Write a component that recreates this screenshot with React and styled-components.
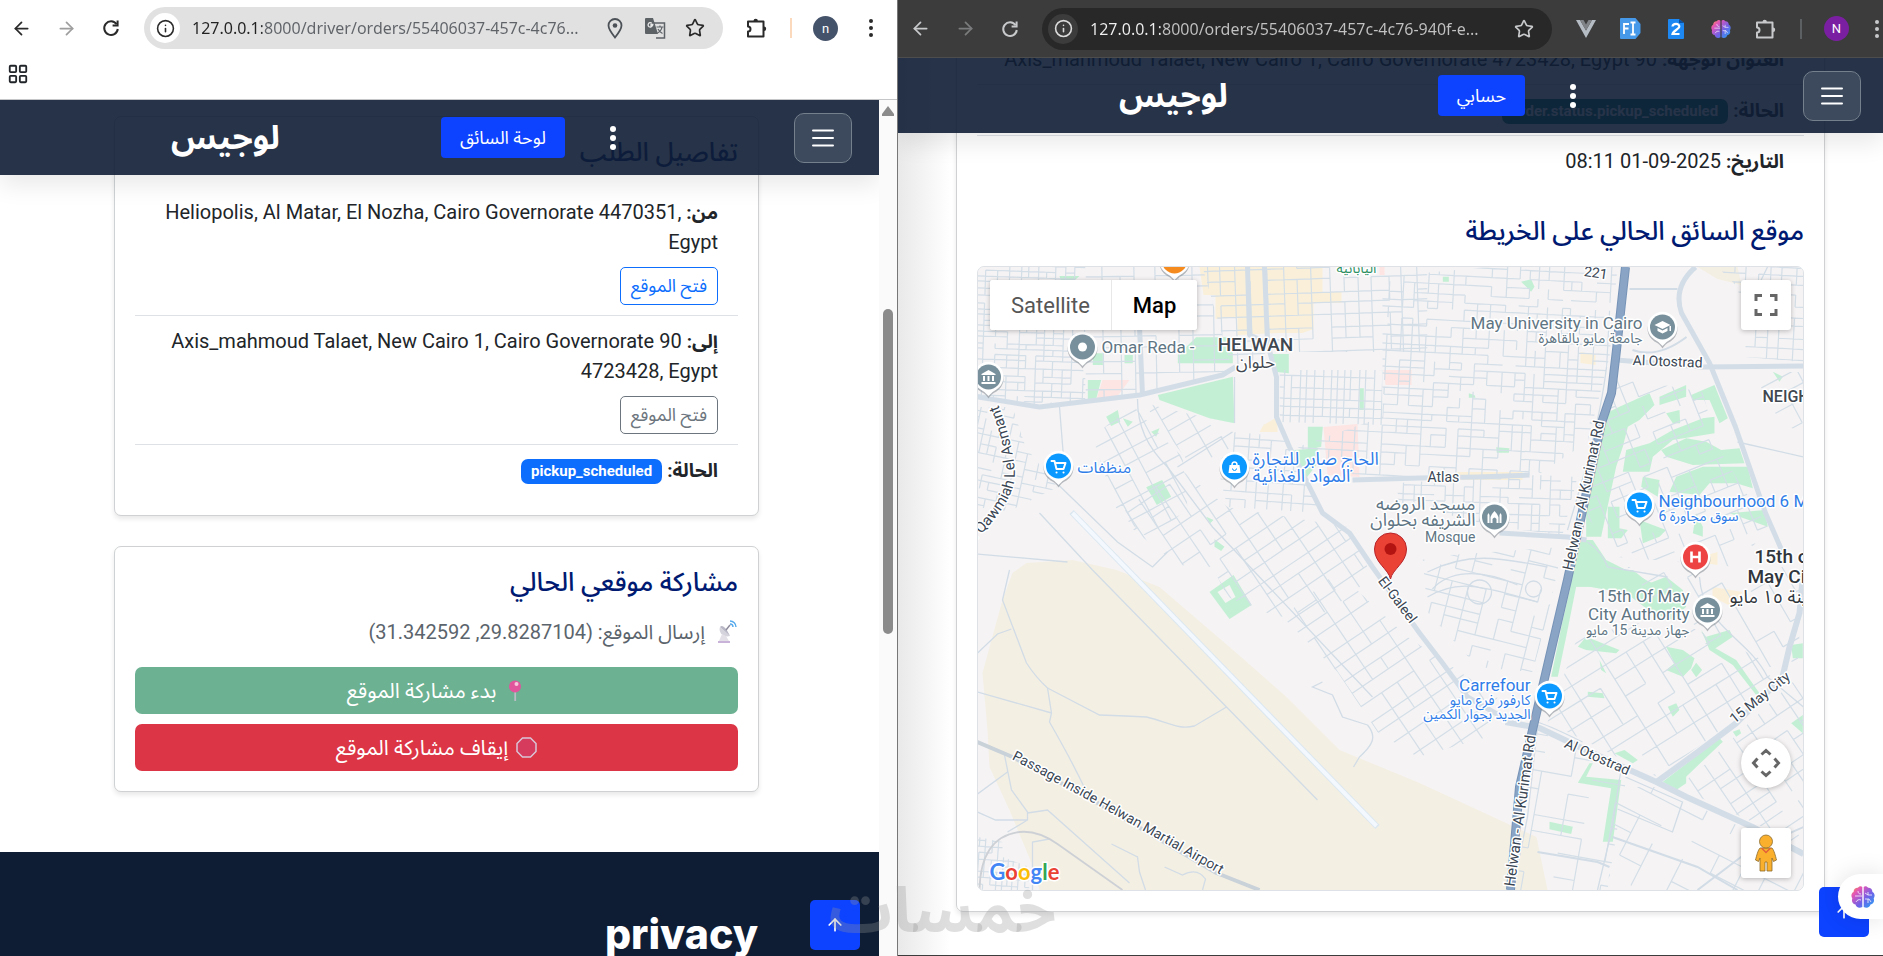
import React from "react";
import styled, { createGlobalStyle, css } from "styled-components";
import { ArrowLeft, ArrowRight, ArrowUp, Info, LayoutGrid, Star } from "lucide-react";

const sans = `Roboto, "Noto Sans Arabic", "Noto Sans", "DejaVu Sans", sans-serif`;
const chromeFont = `"Noto Sans", "Open Sans", sans-serif`;

const GlobalStyle = createGlobalStyle`
  * { box-sizing: border-box; }
  body { margin: 0; background: #fff; font-family: ${sans}; color: #212529; }
  button, input { font-family: inherit; }
  button { cursor: pointer; }
  h2, p, ul { margin: 0; padding: 0; }
`;

/* ---------- desktop and browser windows ---------- */

const Desktop = styled.div`
  position: relative;
  display: grid;
  grid-template-columns: minmax(0, 898fr) minmax(0, 985fr);
  height: 100vh;
  min-height: 600px;
  overflow: hidden;
`;

const Window = styled.section`
  display: flex;
  flex-direction: column;
  min-width: 0;
  min-height: 0;
  overflow: hidden;
  background: #fff;
  ${(p) => p.$dark
    ? css`border-bottom: 1px solid #3c3c3c;`
    : css`border-right: 1px solid #777;`}
`;

const Toolbar = styled.header`
  display: flex;
  align-items: center;
  flex: none;
  height: ${(p) => (p.$dark ? 58 : 56)}px;
  padding: 0 ${(p) => (p.$dark ? 0 : 14)}px 0 ${(p) => (p.$dark ? 12 : 11)}px;
  background: ${(p) => (p.$dark ? "#3c3c3c" : "#fff")};
  color: ${(p) => (p.$dark ? "#c7c9cb" : "#2a2a2a")};
  border-bottom: ${(p) => (p.$dark ? "1px solid #4d4d4d" : "0")};
`;

const ToolGroup = styled.div`
  display: flex;
  align-items: center;
  flex: none;
  gap: ${(p) => p.$gap}px;
`;

const IconButton = styled.button`
  display: grid;
  place-items: center;
  flex: none;
  width: ${(p) => p.$w || 20}px;
  height: 32px;
  padding: 0;
  border: 0;
  background: none;
  color: inherit;
  opacity: ${(p) => (p.$faded ? 0.45 : 1)};
`;

const Omnibox = styled.form`
  display: flex;
  align-items: center;
  flex: 1;
  min-width: 0;
  height: 42px;
  margin: 0 22px 0 ${(p) => (p.$dark ? 22 : 23)}px;
  padding: 0 18px 0 6px;
  gap: 18px;
  border-radius: 21px;
  background: ${(p) => (p.$dark ? "#282828" : "#e1e1e1")};
`;

const SiteInfo = styled.button`
  display: grid;
  place-items: center;
  flex: none;
  width: 30px;
  height: 30px;
  margin-right: -6px;
  padding: 0;
  border: 0;
  border-radius: 50%;
  background: ${(p) => (p.$dark ? "#3c3c3c" : "#fff")};
  color: ${(p) => (p.$dark ? "#dcdcdc" : "#2a2a2a")};
`;

const Address = styled.input`
  flex: 1;
  min-width: 0;
  height: 30px;
  padding: 0;
  border: 0;
  outline: 0;
  font-family: ${chromeFont};
  font-size: 16px;
  color: transparent;
  background: linear-gradient(
    90deg,
    ${(p) => (p.$dark ? "#f0f0f0 70px, #c2c2c2 70px" : "#222 70px, #5f6368 70px")}
  );
  background-clip: text;
  -webkit-background-clip: text;
`;

const Divider = styled.span`
  width: 2px;
  height: 20px;
  background: ${(p) => (p.$dark ? "#5d6063" : "#fbd9bd")};
`;

const Avatar = styled.button`
  width: 25px;
  height: 25px;
  padding: 0;
  border: 0;
  border-radius: 50%;
  background: ${(p) => p.$bg};
  color: #fff;
  font-size: 13px;
  line-height: 25px;
`;

const Bookmarks = styled.div`
  display: flex;
  align-items: center;
  flex: none;
  height: 44px;
  padding: 0 7px 8px;
  border-bottom: 1px solid #c4c6c8;
`;

/* ---------- web page ---------- */

const Viewport = styled.div`
  position: relative;
  display: flex;
  flex: 1;
  min-height: 0;
  overflow: hidden;
`;

const Page = styled.div`
  position: relative;
  flex: 1;
  min-width: 0;
  overflow: hidden;
  direction: rtl;
  ${(p) => p.$shaded && css`
    background: linear-gradient(90deg, #e9e9e9, #fff 52px);
  `}
`;

const Navbar = styled.nav`
  position: absolute;
  z-index: 2;
  inset: 0 0 auto;
  display: flex;
  align-items: center;
  justify-content: space-between;
  height: 75px;
  padding: 0 ${(p) => p.$end}px 0 ${(p) => p.$start}px;
  background: rgba(14, 29, 52, 0.9);
  box-shadow: 0 10px 25px rgba(0, 0, 0, 0.09);
`;

const NavActions = styled.div`
  display: flex;
  align-items: center;
  gap: 44px;
  padding-right: 16px;
  color: #fff;
`;

const MenuButton = styled.button`
  display: grid;
  place-items: center;
  width: 58px;
  height: 50px;
  padding: 0;
  border: 1px solid #74808c;
  border-radius: 10px;
  background: #3d495c;
  color: #fff;
`;

const NavButton = styled.a`
  padding: 0 19px;
  border-radius: 4px;
  background: #0d42ff;
  color: #fff;
  font-size: 18px;
  line-height: 41px;
  text-decoration: none;
  white-space: nowrap;
`;

const Brand = styled.a`
  color: #fff;
  font-size: 33px;
  font-weight: 700;
  line-height: 50px;
  text-decoration: none;
`;

const Content = styled.main`
  display: flex;
  flex-direction: column;
  gap: 30px;
  padding: ${(p) => (p.$scrolled ? "0 58px" : "16px 120px 60px 114px")};
  margin-top: ${(p) => (p.$scrolled ? -45 : 0)}px;
`;

const Card = styled.article`
  padding: 20px;
  border: 1px solid #cfd1d3;
  border-radius: 7px;
  background: ${(p) => (p.$clear ? "transparent" : "#fff")};
  box-shadow: 0 3px 5px rgba(0, 0, 0, 0.09);
`;

const Title = styled.h2`
  margin: ${(p) => (p.$spaced ? 30 : 0)}px 0 20px;
  color: #001a72;
  font-size: 26px;
  font-weight: 500;
  line-height: 30px;
`;

const Details = styled.ul`
  list-style: none;
`;

const Detail = styled.li`
  padding: 10px 20px;
  font-size: 20px;
  line-height: 30px;
  & + & { border-top: 1px solid #dee2e6; }
`;

const Term = styled.strong`
  font-size: 19px;
  line-height: 20px;
`;

const Badge = styled.span`
  display: inline-block;
  padding: 0 10px;
  border-radius: 7px;
  background: ${(p) => p.$bg};
  color: #fff;
  font-size: 15px;
  font-weight: 700;
  line-height: 25px;
  vertical-align: middle;
`;

const OpenLink = styled.a`
  display: block;
  width: fit-content;
  margin-top: 10px;
  padding: 0 10px;
  border: 1px solid ${(p) => p.$color};
  border-radius: 5px;
  color: ${(p) => p.$color};
  font-size: 18px;
  line-height: 36px;
  text-decoration: none;
`;

const Status = styled.p`
  display: flex;
  align-items: center;
  gap: 8px;
  margin-bottom: 20px;
  color: #5b646c;
  font-size: 20px;
  line-height: 30px;
`;

const Actions = styled.div`
  display: grid;
  gap: 10px;
`;

const ActionButton = styled.button`
  display: flex;
  align-items: center;
  justify-content: center;
  gap: 8px;
  height: 47px;
  border: 0;
  border-radius: 7px;
  background: ${(p) => p.$bg};
  color: #fff;
  font-size: 21px;
`;

const Footer = styled.footer`
  min-height: 180px;
  padding: 52px 121px;
  background: #0e1d34;
`;

const FooterTitle = styled.h2`
  color: #fff;
  font-family: Inter, sans-serif;
  font-size: 41px;
  font-weight: 800;
  line-height: 60px;
`;

const ToTop = styled.a`
  position: absolute;
  z-index: 3;
  bottom: ${(p) => p.$bottom}px;
  right: ${(p) => p.$right}px;
  display: grid;
  place-items: center;
  width: 50px;
  height: 50px;
  border-radius: 5px;
  background: #0d42ff;
  color: #fff;
`;

const Scrollbar = styled.div`
  display: flex;
  flex-direction: column;
  align-items: center;
  flex: none;
  width: 18px;
  padding-top: 6px;
  background: #fafafa;
`;

const Thumb = styled.div`
  width: 10px;
  height: 325px;
  margin-top: 193px;
  border-radius: 5px;
  background: #8b8b8b;
`;

const Assistant = styled.button`
  position: absolute;
  z-index: 4;
  right: 0;
  bottom: 36px;
  display: flex;
  align-items: center;
  width: 45px;
  height: 45px;
  padding: 0 8px 0 13px;
  border: 0;
  border-radius: 23px 0 0 23px;
  background: #fff;
  box-shadow: 0 0 24px rgba(0, 0, 0, 0.12);
`;

const Watermark = styled.div`
  position: absolute;
  z-index: 5;
  left: 44%;
  bottom: 0;
  color: rgba(150, 150, 150, 0.3);
  font-family: "Noto Sans Arabic", "DejaVu Sans", sans-serif;
  font-size: 63px;
  font-weight: 700;
  line-height: 88px;
  pointer-events: none;
`;

/* ---------- map ---------- */

const MapFrame = styled.div`
  position: relative;
  height: 625px;
  border: 1px solid #dee2e6;
  border-radius: 7px;
  overflow: hidden;
  direction: ltr;
  background: #f5f3f4;
`;

const MapDrawing = styled.svg`
  display: block;
  width: 100%;
  height: 100%;
`;

const MapTypes = styled.div`
  position: absolute;
  top: 13px;
  left: 12px;
  display: flex;
  border-radius: 3px;
  overflow: hidden;
  background: #fff;
  box-shadow: 0 1px 5px rgba(0, 0, 0, 0.25);
`;

const MapType = styled.button`
  height: 50px;
  padding: 0 21px;
  border: 0;
  border-left: ${(p) => (p.$active ? "1px solid #e8e8e8" : "0")};
  background: #fff;
  color: ${(p) => (p.$active ? "#000" : "#565656")};
  font-size: 22px;
  font-weight: ${(p) => (p.$active ? 500 : 400)};
`;

const MapControls = styled.div`
  position: absolute;
  inset: 13px 12px 12px auto;
  display: flex;
  flex-direction: column;
  gap: 40px;
`;

const MapControl = styled.button`
  display: grid;
  place-items: center;
  width: 50px;
  height: 50px;
  margin-bottom: ${(p) => (p.$first ? "auto" : 0)};
  padding: 0;
  border: 0;
  border-radius: ${(p) => (p.$round ? "50%" : "3px")};
  background: #fff;
  box-shadow: 0 1px 5px rgba(0, 0, 0, 0.25);
`;

const Label = styled.text`
  font-family: ${sans};
  font-size: ${(p) => p.$size || 17}px;
  font-weight: ${(p) => p.$weight || 400};
  fill: ${(p) => p.$color || "#607583"};
  stroke: #fff;
  stroke-width: 3px;
  stroke-linejoin: round;
  paint-order: stroke;
`;

const RoadLabel = styled(Label).attrs((p) => ({ $size: p.$size || 14, $color: "#3a4654" }))``;

const Logo = styled.text`
  font-family: Lato, sans-serif;
  font-size: 22px;
  font-weight: 700;
  stroke: #fff;
  stroke-width: 3px;
  paint-order: stroke;
`;

/* ---------- icons ---------- */

const Reload = () => (
  <svg width="20" height="20" viewBox="0 0 20 20" fill="none" stroke="currentColor" strokeWidth="2">
    <path d="M15.6 6.2A6.8 6.8 0 1 0 16.8 11" />
    <path d="M16.6 2.6v5h-5" />
  </svg>
);

const Dots = () => (
  <svg width="8" height="20" viewBox="-4 -10 8 20" fill="currentColor">
    <circle cy="-7" r="2" /><circle r="2" /><circle cy="7" r="2" />
  </svg>
);

const LargeDots = () => (
  <svg width="8" height="28" viewBox="-4 -14 8 28" fill="currentColor">
    <circle cy="-9" r="3" /><circle r="3" /><circle cy="9" r="3" />
  </svg>
);

const Puzzle = () => (
  <svg width="22" height="22" viewBox="0 0 22 22" fill="none" stroke="currentColor" strokeWidth="2" strokeLinejoin="round">
    <path d="M2 4.500h15.500v15H2v-5a2.500 2.500 0 0 0 0-5z" />
    <path d="M7.500 4a2.200 2.200 0 0 1 4.400 0zM18 9.500a2.200 2.200 0 0 1 0 4.400z" fill="currentColor" stroke="none" />
  </svg>
);

const LocationPin = () => (
  <svg width="16" height="21" viewBox="0 0 16 21" fill="none" stroke="#4b5157" strokeWidth="1.800">
    <path d="M8 19.500C4 14.500 1.500 11 1.500 7.500a6.500 6.500 0 0 1 13 0c0 3.500-2.500 7-6.500 12z" />
    <circle cx="8" cy="7.500" r="2.300" fill="#4b5157" stroke="none" />
  </svg>
);

const Translate = () => (
  <svg width="21" height="21" viewBox="0 0 21 21" fill="none">
    <path d="M9 5h10.500v15H11" stroke="#5d6267" strokeWidth="1.500" />
    <path d="M1 0h7l5 16H1a1 1 0 0 1-1-1V1a1 1 0 0 1 1-1z" fill="#5d6267" />
    <path d="M8.500 6.500H6v1.500h1.200A2.200 2.200 0 1 1 6.700 5.200" stroke="#e8e8e8" strokeWidth="1.300" />
    <path d="M11.500 9h7M15 7.500V9M17 9c-.5 3-2.500 5-4.500 6M13 11c1 2 2.500 3.500 4.500 4.500" stroke="#5d6267" strokeWidth="1.200" />
  </svg>
);

const Bars = () => (
  <svg width="22" height="20" viewBox="0 0 22 20" stroke="#fff" strokeWidth="2" strokeLinecap="round">
    <path d="M1 2.500h20M1 10h20M1 17.500h20" />
  </svg>
);

const VueMark = () => (
  <svg width="20" height="18" viewBox="0 0 20 18">
    <path d="M0 0h4l6 10.500L16 0h4L10 18z" fill="#b5bcc3" />
    <path d="M4 0h3.500L10 4.500 12.500 0H16l-6 10.500z" fill="#808488" />
  </svg>
);

const FontMark = () => (
  <svg width="21" height="21" viewBox="0 0 21 21">
    <path d="M1 0h14.500l5 6v9l-5 6H1a1 1 0 0 1-1-1V1a1 1 0 0 1 1-1z" fill="#4698e8" />
    <path d="M4 16V6h5M4 10.500h4.500M10.500 4.500h5M10.500 16.500h5M13 4.500v12" stroke="#fff" strokeWidth="1.800" fill="none" />
  </svg>
);

const TwoMark = () => (
  <svg width="16" height="20" viewBox="0 0 16 20">
    <path d="M1 0h10l5 4v15a1 1 0 0 1-1 1H1a1 1 0 0 1-1-1V1a1 1 0 0 1 1-1z" fill="#1d88f2" />
    <path d="M11 0l5 4h-5z" fill="#0c4f9e" />
    <path d="M4.500 7.500c.3-3.500 7-3.500 6.800 0C11.200 10 5 12 4.500 15h7" stroke="#fff" strokeWidth="2.200" fill="none" />
  </svg>
);

const Brain = ({ size = 20 }) => (
  <svg width={size} height={size} viewBox="0 0 24 24">
    <defs>
      <linearGradient id={`brain${size}`} x1="0" y1="0" x2="1" y2="1">
        <stop offset="0" stopColor="#ff9a3c" /><stop offset=".25" stopColor="#e255b8" />
        <stop offset=".6" stopColor="#6e62e8" /><stop offset="1" stopColor="#1fa9f5" />
      </linearGradient>
    </defs>
    <path
      fill={`url(#brain${size})`}
      d="M11.300 2v20C8 24 5 22 4.500 19.500 1.500 19 .3 16 1.300 13.500-.3 11 .3 8 2.600 7 2.500 4 5 2.500 6.800 2.800 8 .8 10.500.8 11.300 2zM12.700 2v20c3.300 2 6.300 0 6.800-2.500 3-.5 4.200-3.500 3.200-6 1.600-2.500 1-5.500-1.300-6.500.1-3-2.400-4.500-4.200-4.200C16 .8 13.500.8 12.700 2z"
    />
    <path
      d="M4 11h7M7 6c0 2 1 3 3 3M5 17c1-2 3-3 5-2M17 7v3h4M14 8l3 2M14 14h4l2 3M17 18v-4"
      stroke="#fff" strokeOpacity=".75" strokeWidth="1" fill="none"
    />
  </svg>
);

const Satellite = () => (
  <svg width="25" height="24" viewBox="-2 0 25 24" fill="none">
    <path d="M5 7c-2 5 3 11 10 9z" fill="#d5d3dc" />
    <path d="M5 7c2-3 6 0 10 9" fill="#b9b8c6" />
    <path d="M7 14l-3 7h10l-3-5z" fill="#e4e0e8" />
    <path d="M3 21h12v2H3z" fill="#c9b3d8" />
    <path d="M11 10l4-5" stroke="#8e8c9c" strokeWidth="1.500" />
    <path d="M15 4a3 3 0 0 1 3 3M15 1a6 6 0 0 1 6 6" stroke="#55a9ec" strokeWidth="1.400" />
  </svg>
);

const RoundPin = () => (
  <svg width="22" height="22" viewBox="0 0 22 22">
    <path d="M10.300 10h1.800v11h-1.800z" fill="#b9bcc5" />
    <circle cx="11" cy="6.500" r="6" fill="#e0559c" />
    <circle cx="12.500" cy="4" r="2" fill="#f8c6dc" />
  </svg>
);

const StopSign = () => (
  <svg width="21" height="21" viewBox="0 0 21 21">
    <path d="M6.500 1h8L20 6.500v8L14.500 20h-8L1 14.500v-8z" fill="#d63a5d" stroke="#d9c5d6" strokeWidth="1.500" />
  </svg>
);

const FullscreenIcon = () => (
  <svg width="24" height="24" viewBox="0 0 24 24" fill="none" stroke="#666" strokeWidth="3">
    <path d="M2 8V2.500h6M16 2.500h6V8M22 16v5.500h-6M8 21.500H2V16" />
  </svg>
);

const PanIcon = () => (
  <svg width="30" height="30" viewBox="0 0 30 30" fill="none" stroke="#666" strokeWidth="3">
    <path d="M10.500 6.500L15 2.500l4.500 4M10.500 23.500l4.500 4 4.500-4M6.500 10.500L2.500 15l4 4.500M23.500 10.500l4 4.500-4 4.500" />
  </svg>
);

const Pegman = () => (
  <svg width="24" height="38" viewBox="0 0 24 38" fill="#fbb02d" stroke="#8a6a2c" strokeWidth=".8">
    <path d="M6 14h12c2 2 3.500 8 4.500 12l-3 1.500L18 24v13h-5v-9h-2v9H6V24l-1.500 3.500-3-1.500C2.500 22 4 16 6 14z" />
    <circle cx="12" cy="7.500" r="6.500" />
    <path d="M7.500 14l4.500 4.500 4.500-4.500" fill="none" stroke="#e2603a" strokeWidth="1.500" />
  </svg>
);

/* ---------- map drawing ---------- */

const rng = (seed) => () => {
  seed = (seed * 16807) % 2147483647;
  return seed / 2147483647;
};

/* Streets of one district: an irregular grid turned by an angle and cut to the district's outline. */
function District({ id, outline, angle = 0, dx, dy, keep = 0.8, seed = 7 }) {
  const pts = outline.split(" ").map((p) => p.split(",").map(Number));
  const cx = pts.reduce((s, p) => s + p[0], 0) / pts.length;
  const cy = pts.reduce((s, p) => s + p[1], 0) / pts.length;
  const reach = Math.max(...pts.map((p) => Math.hypot(p[0] - cx, p[1] - cy)));
  const next = rng(seed * 977);
  const spread = (step) => {
    const out = [];
    for (let v = -reach; v < reach; v += step * (0.7 + next() * 0.6)) out.push(Math.round(v));
    return out;
  };
  const xs = spread(dx);
  const ys = spread(dy);
  let d = "";
  xs.forEach((x, i) =>
    ys.forEach((y, j) => {
      if (xs[i + 1] !== undefined && next() < keep) d += `M${x} ${y}H${xs[i + 1]}`;
      if (ys[j + 1] !== undefined && next() < keep) d += `M${x} ${y}V${ys[j + 1]}`;
    })
  );
  return (
    <g clipPath={`url(#${id})`}>
      <clipPath id={id}><polygon points={outline} /></clipPath>
      <path d={d} transform={`translate(${cx} ${cy}) rotate(${angle})`} stroke="#d3dee7" strokeWidth="1.200" fill="none" />
    </g>
  );
}

const districts = [
  { outline: "0,0 108,0 108,133 62,138 0,128", dx: 10, dy: 7, angle: 2, keep: 0.8 },
  { outline: "108,0 225,0 255,104 162,126 108,134", dx: 19, dy: 15, angle: -1, keep: 0.8 },
  { outline: "225,0 450,0 450,85 290,85 255,104", dx: 15, dy: 14, angle: -2, keep: 0.85 },
  { outline: "302,103 405,103 405,158 302,155", dx: 8, dy: 10, angle: 2, keep: 0.95 },
  { outline: "405,10 510,0 640,0 632,90 610,175 560,208 375,210 320,180 405,150", dx: 12, dy: 9, angle: 3, keep: 0.7 },
  { outline: "257,165 310,170 330,216 345,246 250,240 240,200", dx: 13, dy: 11, angle: 4 },
  { outline: "420,216 560,208 600,210 585,268 520,260 420,235", dx: 10, dy: 9, angle: 2, keep: 0.75 },
  { outline: "0,140 35,140 48,180 80,220 30,245 0,240", dx: 10, dy: 8, angle: 12, keep: 0.6 },
  { outline: "115,170 155,138 175,160 205,190 210,240 175,275 140,245", dx: 20, dy: 17, angle: -28, keep: 0.85 },
  { outline: "165,135 182,140 225,150 255,180 215,200", dx: 22, dy: 18, angle: -30, keep: 0.6 },
  { outline: "140,250 200,200 250,240 370,260 395,310 350,345 300,350 250,330 235,300 200,298", dx: 19, dy: 16, angle: -34, keep: 0.85 },
  { outline: "305,350 360,305 430,370 520,430 510,470 440,490 400,465 360,405", dx: 20, dy: 17, angle: -34, keep: 0.85 },
  { outline: "445,290 585,280 570,350 555,405 500,400 450,345", dx: 16, dy: 11, angle: 14, keep: 0.6 },
  { outline: "600,370 690,350 780,390 800,420 680,510 620,480 570,455", dx: 21, dy: 19, angle: -32, keep: 0.8 },
  { outline: "725,500 815,415 826,420 826,580 775,555 700,520", dx: 17, dy: 15, angle: -34, keep: 0.8 },
  { outline: "560,460 650,505 640,560 630,623 540,623 548,530", dx: 25, dy: 20, angle: 10, keep: 0.6 },
  { outline: "640,520 680,520 826,590 826,623 630,623", dx: 27, dy: 21, angle: 27, keep: 0.7 },
  { outline: "640,110 725,125 740,180 790,260 760,300 640,290 610,250 625,160", dx: 15, dy: 13, angle: -22, keep: 0.55 },
  { outline: "650,300 740,300 826,300 820,400 760,400 690,350", dx: 23, dy: 18, angle: -30, keep: 0.5 },
  { outline: "740,0 826,0 826,95 768,90 768,60 760,20", dx: 14, dy: 11, angle: 3, keep: 0.75 },
  { outline: "775,105 826,105 826,170 800,150", dx: 24, dy: 18, angle: -28, keep: 0.7 },
  { outline: "0,570 25,575 25,590 52,600 52,623 0,623", dx: 7, dy: 7, angle: 4 },
];

const GREENS_NW = "M595 435L820 380L825 520L750 505L600 450zM655 315L710 262H820V340H655zM940 312H988V370L945 365zM1200 415H1213V480H1200zM385 390H425L410 447H385zM440 500L475 480L482 515L455 528zM490 505L520 515L505 530zM560 712L608 690L635 740L592 765L575 735zM1045 530H1090L1085 590L1045 600zM1005 600L1075 595V640L1040 685L1005 640zM765 868L795 890L785 903L765 890zM740 800L762 810L752 820zM300 78H360L340 95H305zM400 310H430V345H400zM495 315H520V340H495zM575 545L600 535L590 560z";
const GREENS_NE = "M560 490L600 470L690 430L705 465L660 510L625 530L610 590L590 650L545 860H500V790L540 600zM305 95L335 88L345 110L335 125zM70 80H88V95H70zM148 430L165 435L168 443H148zM230 592L270 595L268 608H232zM720 440L800 405V440L720 465zM815 435L885 405L925 505L900 520L870 450L820 450zM740 490L780 480L782 520L760 520zM760 540L850 505L885 500V550L760 570L700 620L690 665L610 665L620 600L690 580zM725 600L800 565L860 575L905 600L960 595L975 640L820 645L740 620zM770 680L850 650L985 650L1000 715L950 700L870 700L840 735L750 725zM565 770H600V835L625 840L605 865H565zM670 680L720 690L715 740L665 710zM660 810L740 840L720 860L670 880zM830 790L850 830V860L820 850zM1060 365L1090 380L1080 395zM930 790L1035 780L1045 830L960 800zM465 870H520L560 930L720 1010H440z";
const GREENS_SE = "M465 0H640L690 40L740 20L790 60L800 110L760 150L700 130L620 70L510 50L470 50L440 200L415 320H395L430 150zM475 230L500 200L600 240L590 250L500 240zM740 230L790 240L825 265L815 295L790 320L740 300L765 280zM815 300L830 278L848 300L830 322zM505 365L550 370L555 385L505 380zM860 200L930 180L940 200L880 240zM845 180L880 230L950 270L1020 370L1010 375L940 285L870 240zM745 410L770 400L780 420L760 440zM585 550L615 540L655 570L640 580zM730 635L900 505L910 515L800 620V640L770 660zM510 580H520L500 620L605 630L580 815H550L575 655L475 638zM390 755L460 770L455 792L390 778zM1115 225L1150 220V265H1120zM1115 460L1150 435V490zM940 485L960 478L965 490L950 500zM540 270L560 310L545 300z";

const Glyph = ({ kind }) => {
  switch (kind) {
    case "cart":
      return <path d="M-7-5h3l2 8h7l2-6H-3M-2 6.500h.1M5 6.500h.1" fill="none" stroke="#fff" strokeWidth="2" strokeLinecap="round" strokeLinejoin="round" />;
    case "bag":
      return <><path d="M-5-2H5L6 6H-6z" fill="#fff" /><path d="M-2.500-2a2.500 3 0 0 1 5 0" fill="none" stroke="#fff" strokeWidth="1.500" /><path d="M-2 1.500a2 2 0 0 0 4 0" fill="none" stroke="#0b99ff" /></>;
    case "museum":
      return <><path d="M0-7l7 4v1H-7v-1zM-7 5H7v2H-7z" fill="#fff" /><path d="M-4.500-1v5M0-1v5M4.500-1v5" stroke="#fff" strokeWidth="2" /></>;
    case "mosque":
      return <path d="M-7 6v-8l1-2 1 2v8zM5 6v-8l1-2 1 2v8zM-4 6V0Q-3-3 0-6 3-3 4 0v6H2V2Q0-1-2 2v4z" fill="#fff" />;
    case "school":
      return <path d="M-8-2L0-6 8-2 0 2zM-5 1L0 3.500 5 1v3L0 6.500-5 4zM7-1h1.500v5H7z" fill="#fff" />;
    case "hospital":
      return <path d="M-4-5.500v11M4-5.500v11M-4 0h8" stroke="#fff" strokeWidth="2.600" />;
    default:
      return <circle r="4.500" fill="#fff" />;
  }
};

const Place = ({ x, y, color = "#78909c", kind }) => (
  <g transform={`translate(${x} ${y})`}>
    <path d="M0 20Q-3 15-8 13A15 15 0 1 1 8 13Q3 15 0 20z" fill="#8b9197" opacity=".6" transform="translate(0 1.500)" />
    <path d="M0 19Q-3 15-8 12.500A15 15 0 1 1 8 12.500Q3 15 0 19z" fill="#fff" />
    <circle r="12.500" fill={color} />
    <Glyph kind={kind} />
  </g>
);

const blue = "#2f7de8";
const shop = "#0b99ff";

const CityMap = () => (
  <MapDrawing viewBox="0 0 826 623" preserveAspectRatio="xMidYMid slice" role="img" aria-label="Map">
    <rect width="826" height="623" fill="#f5f3f4" />
    <path d="M35 306L49 296L95 293L139 303L182 320L259 386L309 430L362 483L442 516L559 570L570 623H62L54 596L32 543L12 500L10 463L5 406L25 333z" fill="#f4efe3" />
    <path d="M720 0H760L764 18L740 12z" fill="#f4efe3" />
    <path d="M222 0H345V25H364V36H336V62L325 66H300L260 68V50L238 52V28H226zM480 205H545V213H480zM603 85L618 88V98L603 96zM286 158L300 150V165H282zM735 320L765 325L755 340L735 330zM730 288L740 285V298L728 296z" fill="#faf0d9" />
    <path d="M125 113H152L138 132L119 132zM406 103H434V118H408zM346 160L380 157L382 210L350 208zM402 0H407V8H402z" fill="#fde5e3" />
    <g transform="translate(-18 -17) scale(.33333)" fill="#c3f0d4"><path d={GREENS_NW} /></g>
    <g transform="translate(442 -17) scale(.33333)" fill="#c3f0d4"><path d={GREENS_NE} /></g>
    <g transform="translate(442 303) scale(.33333)" fill="#c3f0d4"><path d={GREENS_SE} /></g>
    <path d="M232 325L256 308L274 338L252 352z" fill="#c3f0d4" />
    <path d="M240 325L252 318L258 330L248 336z" fill="#f5f3f4" />

    {districts.map((d, i) => <District key={i} id={`d${i}`} seed={i + 3} {...d} />)}

    <g fill="none" stroke="#d1dce6" strokeWidth="1.300">
      <path d="M62 246L115 303L249 440L340 533M70 421L122 448Q150 449 169 450C190 455 200 463 217 459L249 440" />
      <path d="M32 303L25 333L49 396Q58 410 70 421L74 446L72 455Q95 495 109 525M0 425L74 446M0 386L20 367L34 362" />
      <path d="M0 287L90 295M0 527L30 505M27 488L34 523L50 545V553L30 565M50 546L70 543L152 616M0 545L18 553L50 553M55 623V575L72 572" />
      <path d="M79 216L140 275L175 300L190 285M160 132C160 160 170 180 190 200L235 260L395 430M82 140L86 190M255 165L200 200M257 110V156" />
      <path d="M134 577L160 590L162 605L168 623M187 600L205 608Q220 600 228 612L225 623M345 415L335 420L355 428L365 450L390 458M390 458C400 470 395 478 382 490L376 500" />
      <path d="M455 322C470 305 500 300 540 318M450 330C480 312 500 318 560 335M450 305C490 285 520 290 570 300M490 325a12 12 0 1 0 24 0a12 12 0 1 0-24 0M548 322a8 8 0 1 0 16 0a8 8 0 1 0-16 0" />
      <path d="M610 275Q625 285 630 300L690 310M722 310C725 360 770 370 790 410L826 440M760 175L826 190M790 0L768 45" />
      <path d="M629 100C622 160 600 230 590 263M560 460L550 550L540 600M560 455Q575 460 605 475M642 512L635 560L620 623M648 510L705 535L695 565L640 542" />
      <path d="M655 83Q680 92 709 70M652 22H700M635 570L720 600L760 623M720 623L770 585L826 560M560 585L620 595L632 600" strokeWidth="2" />
    </g>
    <path d="M2 623Q3 570 42 565Q60 563 80 577L145 623" fill="none" stroke="#cdd1d6" strokeWidth="1.800" />
    <path d="M94 245L400 560" stroke="#dbe7f0" strokeWidth="6" />
    <path d="M95 246L399 559" stroke="#f2f8fd" strokeWidth="4" />

    <g fill="none" stroke="#d3dde7" strokeWidth="5" strokeLinejoin="round">
      <path d="M0 130L62 140L162 128L245 108L258 100M162 60L165 128M270 0L272 68L290 76M375 213L442 211L500 210L552 208" />
      <path d="M287 0L290 76L299 110V150L312 180L330 216L345 246L372 266L395 300L442 366L465 396L490 430L528 452" />
      <path d="M639 93L725 100L826 99M718 0Q695 20 704 46L732 96L758 160L788 246L805 285M522 266L590 270L609 273" />
      <path d="M528 455L562 461L602 480L652 503L679 515L709 530L775 560L826 587M679 515L719 486L759 456L805 410L812 380L822 346L826 303" strokeWidth="6" />
      <path d="M0 475L35 490L115 533L239 606L282 623" stroke="#c9d1d9" strokeWidth="4" />
    </g>
    <path d="M648 0L644 36L639 83L634 126L624 156L590 313L572 390L555 463L542 520L533 623" fill="none" stroke="#7793b7" strokeWidth="9" />
    <path d="M648 0L644 36L639 83L634 126L624 156L590 313L572 390L555 463L542 520L533 623" fill="none" stroke="#89a4c4" strokeWidth="7" />

    <path id="asmant" d="M-8 280C25 245 40 225 37 200Q34 170 16 125" fill="none" />
    <RoadLabel $size={15}><textPath href="#asmant">Al Qawmiah Lel Asmant</textPath></RoadLabel>
    <path id="passage" d="M34 492Q122 538 252 613" fill="none" />
    <RoadLabel><textPath href="#passage">Passage Inside Helwan Martial Airport</textPath></RoadLabel>
    <RoadLabel transform="translate(655 98) rotate(2)">Al Otostrad</RoadLabel>
    <RoadLabel transform="translate(586 480) rotate(24)">Al Otostrad</RoadLabel>
    <RoadLabel transform="translate(757 457) rotate(-39)">15 May City</RoadLabel>
    <RoadLabel $size={15} transform="translate(595 304) rotate(-78)">Helwan - Al Kurimat Rd</RoadLabel>
    <RoadLabel $size={15} transform="translate(537 620) rotate(-82)">Helwan - Al Kurimat Rd</RoadLabel>
    <RoadLabel transform="translate(400 314) rotate(53)">El-Galeel</RoadLabel>
    <RoadLabel transform="translate(606 9) rotate(8)">221</RoadLabel>
    <RoadLabel x="450" y="215">Atlas</RoadLabel>

    <Label x="278" y="84" textAnchor="middle" $size={19} $weight={500} $color="#3f4750">HELWAN</Label>
    <Label x="278" y="101" textAnchor="middle" $size={17} $color="#3f4750">حلوان</Label>
    <Label x="785" y="135" $size={16} $weight={500} $color="#3f4750">NEIGHBOURHOOD</Label>
    <Label x="777" y="296" $size={19} $weight={500} $color="#30363c">15th of</Label>
    <Label x="770" y="316" $size={19} $weight={500} $color="#30363c">May City</Label>
    <Label x="752" y="336" $size={18} $color="#30363c">مدينة ١٥ مايو</Label>

    <Place x="197" y="-6" color="#f58a1f" kind="dot" />
    <Place x="105" y="80" kind="dot" />
    <Place x="11" y="110" kind="museum" />
    <Place x="81" y="199" color={shop} kind="cart" />
    <Place x="257" y="200" color={shop} kind="bag" />
    <Place x="685" y="60" kind="school" />
    <Place x="662" y="238" color={shop} kind="cart" />
    <Place x="517" y="250" kind="mosque" />
    <Place x="718" y="290" color="#ee4343" kind="hospital" />
    <Place x="730" y="343" kind="museum" />
    <Place x="572" y="429" color={shop} kind="cart" />

    <Label x="379" y="6" textAnchor="middle" $size={14} $color="#2e8f62">اليابانية</Label>
    <Label x="124" y="86">Omar Reda -</Label>
    <Label x="100" y="206" $color={blue} $size={16}>منظفات</Label>
    <Label x="275" y="198" $color={blue} $size={18}>الحاج صابر للتجارة</Label>
    <Label x="275" y="215" $color={blue} $size={18}>المواد الغذائية</Label>
    <Label x="665" y="62" textAnchor="end">May University in Cairo</Label>
    <Label x="665" y="76" textAnchor="end" $size={14}>جامعة مايو بالقاهرة</Label>
    <Label x="498" y="243" textAnchor="end" $size={18}>مسجد الروضه</Label>
    <Label x="498" y="259" textAnchor="end" $size={18}>الشريفه بحلوان</Label>
    <Label x="498" y="275" textAnchor="end" $size={14}>Mosque</Label>
    <Label x="681" y="240" $color={blue}>Neighbourhood 6 Market</Label>
    <Label x="681" y="254" $color={blue} $size={14}>سوق مجاورة 6</Label>
    <Label x="712" y="335" textAnchor="end">15th Of May</Label>
    <Label x="712" y="353" textAnchor="end">City Authority</Label>
    <Label x="712" y="368" textAnchor="end" $size={14}>جهاز مدينة 15 مايو</Label>
    <Label x="553" y="424" textAnchor="end" $color={blue}>Carrefour</Label>
    <Label x="553" y="438" textAnchor="end" $color={blue} $size={14}>كارفور فرع مايو</Label>
    <Label x="553" y="452" textAnchor="end" $color={blue} $size={14}>الجديد بجوار الكمين</Label>

    <path d="M413 312C411 302 397 296 397 282A16 16 0 1 1 429 282C429 296 415 302 413 312z" fill="#ea4335" stroke="#b8242a" />
    <circle cx="413" cy="282" r="6" fill="#b31412" />

    <Logo x="12" y="613">
      <tspan fill="#4285f4">G</tspan><tspan fill="#ea4335">o</tspan><tspan fill="#fbbc05">o</tspan>
      <tspan fill="#4285f4">g</tspan><tspan fill="#34a853">l</tspan><tspan fill="#ea4335">e</tspan>
    </Logo>
  </MapDrawing>
);

/* ---------- assembled parts ---------- */

const BrowserBar = ({ dark, url, pageActions, extensions, initial, avatar }) => (
  <Toolbar $dark={dark}>
    <ToolGroup $gap={25}>
      <IconButton aria-label="Back"><ArrowLeft size={21} /></IconButton>
      <IconButton aria-label="Forward" $faded><ArrowRight size={21} /></IconButton>
      <IconButton aria-label="Reload"><Reload /></IconButton>
    </ToolGroup>
    <Omnibox $dark={dark} onSubmit={(e) => e.preventDefault()}>
      <SiteInfo $dark={dark} type="button" aria-label="Site information"><Info size={19} /></SiteInfo>
      <Address $dark={dark} aria-label="Address" defaultValue={url} />
      <ToolGroup $gap={20}>
        {pageActions}
        <IconButton type="button" aria-label="Bookmark this page"><Star size={20} /></IconButton>
      </ToolGroup>
    </Omnibox>
    <ToolGroup $gap={dark ? 22 : 21}>
      {extensions}
      <IconButton aria-label="Extensions" $w={24}><Puzzle /></IconButton>
      <Divider $dark={dark} />
      <Avatar $bg={avatar} aria-label="Profile">{initial}</Avatar>
      <IconButton aria-label="Browser menu" $w={dark ? 12 : 24}><Dots /></IconButton>
    </ToolGroup>
  </Toolbar>
);

const SiteNav = ({ action, start, end }) => (
  <Navbar $start={start} $end={end}>
    <MenuButton aria-label="القائمة"><Bars /></MenuButton>
    <NavActions>
      <IconButton aria-label="المزيد" $w={8}><LargeDots /></IconButton>
      <NavButton href="#account">{action}</NavButton>
    </NavActions>
    <Brand href="#home">لوجيس</Brand>
  </Navbar>
);

const DriverWindow = () => (
  <Window>
    <BrowserBar
      url="127.0.0.1:8000/driver/orders/55406037-457c-4c76..."
      initial="n"
      avatar="#45536a"
      pageActions={
        <>
          <IconButton type="button" aria-label="Location access"><LocationPin /></IconButton>
          <IconButton type="button" aria-label="Translate this page"><Translate /></IconButton>
        </>
      }
    />
    <Bookmarks>
      <IconButton aria-label="Apps" $w={22}><LayoutGrid size={22} /></IconButton>
    </Bookmarks>
    <Viewport>
      <Page>
        <SiteNav action="لوحة السائق" start={171} end={27} />
        <Content>
          <Card>
            <Title>تفاصيل الطلب</Title>
            <Details>
              <Detail>
                <Term>من:</Term> Heliopolis, Al Matar, El Nozha, Cairo Governorate 4470351, Egypt
                <OpenLink href="#from" $color="#0d6efd">فتح الموقع</OpenLink>
              </Detail>
              <Detail>
                <Term>إلى:</Term> 90 Axis_mahmoud Talaet, New Cairo 1, Cairo Governorate 4723428, Egypt
                <OpenLink href="#to" $color="#6c757d">فتح الموقع</OpenLink>
              </Detail>
              <Detail>
                <Term>الحالة:</Term> <Badge $bg="#0d6efd">pickup_scheduled</Badge>
              </Detail>
            </Details>
          </Card>
          <Card>
            <Title>مشاركة موقعي الحالي</Title>
            <Status><Satellite /><span>إرسال الموقع: (29.8287104, 31.342592)</span></Status>
            <Actions>
              <ActionButton $bg="#6cb192"><RoundPin />بدء مشاركة الموقع</ActionButton>
              <ActionButton $bg="#dc3545"><StopSign />إيقاف مشاركة الموقع</ActionButton>
            </Actions>
          </Card>
        </Content>
        <Footer><FooterTitle>privacy</FooterTitle></Footer>
        <ToTop href="#top" aria-label="إلى الأعلى" $bottom={6} $right={19}><ArrowUp size={20} /></ToTop>
      </Page>
      <Scrollbar>
        <svg width="12" height="10" viewBox="0 0 12 10"><path d="M6 0l6 8v2H0V8z" fill="#8b8b8b" /></svg>
        <Thumb />
      </Scrollbar>
    </Viewport>
  </Window>
);

const CustomerWindow = () => (
  <Window $dark>
    <BrowserBar
      dark
      url="127.0.0.1:8000/orders/55406037-457c-4c76-940f-e..."
      initial="N"
      avatar="#7b1fa2"
      extensions={
        <>
          <IconButton aria-label="Vue" $w={23}><VueMark /></IconButton>
          <IconButton aria-label="Font finder" $w={23}><FontMark /></IconButton>
          <IconButton aria-label="Notes" $w={23}><TwoMark /></IconButton>
          <IconButton aria-label="Assistant" $w={23}><Brain size={20} /></IconButton>
        </>
      }
    />
    <Viewport>
      <Page $shaded>
        <SiteNav action="حسابي" start={221} end={22} />
        <Content $scrolled>
          <Card $clear>
            <Details>
              <Detail><Term>العنوان الوجهة:</Term> 90 Axis_mahmoud Talaet, New Cairo 1, Cairo Governorate 4723428, Egypt</Detail>
              <Detail><Term>الحالة:</Term> <Badge $bg="#0f7a6c">order.status.pickup_scheduled</Badge></Detail>
              <Detail><Term>التاريخ:</Term> 2025-09-01 08:11</Detail>
            </Details>
            <Title $spaced>موقع السائق الحالي على الخريطة</Title>
            <MapFrame>
              <CityMap />
              <MapTypes>
                <MapType>Satellite</MapType>
                <MapType $active>Map</MapType>
              </MapTypes>
              <MapControls>
                <MapControl $first aria-label="Full screen"><FullscreenIcon /></MapControl>
                <MapControl $round aria-label="Map camera controls"><PanIcon /></MapControl>
                <MapControl aria-label="Street View"><Pegman /></MapControl>
              </MapControls>
            </MapFrame>
          </Card>
        </Content>
        <ToTop href="#top" aria-label="إلى الأعلى" $bottom={18} $right={14}><ArrowUp size={20} /></ToTop>
        <Assistant aria-label="Assistant"><Brain size={24} /></Assistant>
      </Page>
    </Viewport>
  </Window>
);

export default function App() {
  return (
    <>
      <GlobalStyle />
      <Desktop>
        <DriverWindow />
        <CustomerWindow />
        <Watermark lang="ar">خمسات</Watermark>
      </Desktop>
    </>
  );
}
